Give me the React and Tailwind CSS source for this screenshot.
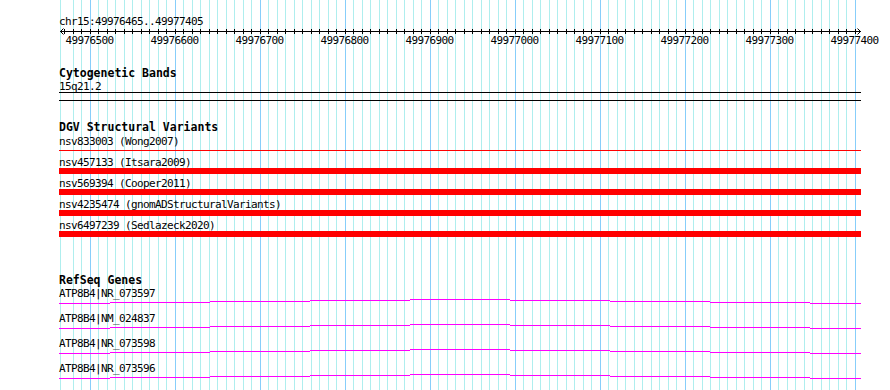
import React from 'react';

const START = 49976465;
const toX = (b) => Math.floor(60.5 + (b - START) * 0.85);

const gridLines = [{ x: 60, major: false }];
for (let b = 49976480; b <= 49977400; b += 10) {
  gridLines.push({ x: toX(b), major: b % 100 === 0 });
}

const tickXs = [];
for (let b = 49976470; b <= 49977400; b += 10) tickXs.push(toX(b));

const labels = [];
for (let b = 49976500; b <= 49977400; b += 100) labels.push(b);

const variants = [
  { name: 'nsv833003 (Wong2007)', thin: true },
  { name: 'nsv457133 (Itsara2009)' },
  { name: 'nsv569394 (Cooper2011)' },
  { name: 'nsv4235474 (gnomADStructuralVariants)' },
  { name: 'nsv6497239 (Sedlazeck2020)' },
];

const genes = ['ATP8B4|NR_073597', 'ATP8B4|NM_024837', 'ATP8B4|NR_073598', 'ATP8B4|NR_073596'];

// intron "hat" drawn as 1px steps, like the rasterised line in the image
const hat = [
  [59, 110, 4],
  [110, 210, 3],
  [210, 310, 2],
  [310, 410, 1],
  [410, 510, 0],
  [510, 610, 1],
  [610, 710, 2],
  [710, 810, 3],
  [810, 861, 4],
];

const small = 'text-[11px] leading-[11px] tracking-[-0.62px]';

function Grid() {
  return (
    <svg className="absolute inset-0 pointer-events-none" width="890" height="390" shapeRendering="crispEdges">
      {gridLines.map((g, i) => (
        <rect key={i} x={g.x} y="0" width="1" height="390" fill={g.major ? '#87cefa' : '#afeeee'} />
      ))}
    </svg>
  );
}

function Ruler() {
  return (
    <svg className="block" width="890" height="8" shapeRendering="crispEdges">
      <rect x="60" y="4" width="801" height="1" fill="#000" />
      {tickXs.map((x) => (
        <rect key={x} x={x} y="2" width="1" height="5" fill="#000" />
      ))}
      <path d="M60.5 4.5 L63.5 1.5 M60.5 4.5 L63.5 7.5 M860.5 4.5 L857.5 1.5 M860.5 4.5 L857.5 7.5" stroke="#000" strokeWidth="1" fill="none" shapeRendering="auto" />
    </svg>
  );
}

function Title({ children, className = '' }) {
  return (
    <div className={`pl-[59px] text-[11.5px] leading-[13px] font-bold ${className}`}>{children}</div>
  );
}

export default function App() {
  return (
    <div className="relative w-[890px] h-[390px] overflow-hidden bg-white text-black font-['DejaVu_Sans_Mono',monospace]">
      <Grid />
      <div className="relative flex flex-col pt-[16px]">
        <div className={`pl-[59px] ${small}`}>chr15:49976465..49977405</div>
        <Ruler />
        <div className={`flex pl-[47px] ${small}`}>
          {labels.map((b) => (
            <div key={b} className="w-[85px] shrink-0 text-center">{b}</div>
          ))}
        </div>

        <Title className="mt-[21px]">Cytogenetic Bands</Title>
        <div className={`mt-px pl-[59px] ${small}`}>15q21.2</div>
        <div className="ml-[59px] w-[802px] h-[9px] border-y border-black" />

        <Title className="mt-[20px]">DGV Structural Variants</Title>
        <div className="mt-[2px] flex flex-col">
          {variants.map((v) => (
            <div key={v.name} className="flex flex-col pb-[4px]">
              <div className={`pl-[59px] ${small}`}>{v.name}</div>
              <div className="ml-[59px] w-[802px] h-[6px]">
                {v.thin ? (
                  <div className="mt-[3px] h-px bg-[#ff0000]" />
                ) : (
                  <div className="h-[6px] bg-[#ff0000]" />
                )}
              </div>
            </div>
          ))}
        </div>

        <Title className="mt-[33px]">RefSeq Genes</Title>
        <div className="mt-px flex flex-col">
          {genes.map((g) => (
            <div key={g} className="flex flex-col">
              <div className={`pl-[59px] ${small}`}>{g}</div>
              <svg className="block" width="890" height="14" shapeRendering="crispEdges">
                {hat.map(([a, b, y]) => (
                  <rect key={a} x={a} y={y} width={b - a} height="1" fill="#ff00ff" />
                ))}
              </svg>
            </div>
          ))}
        </div>
      </div>
    </div>
  );
}
